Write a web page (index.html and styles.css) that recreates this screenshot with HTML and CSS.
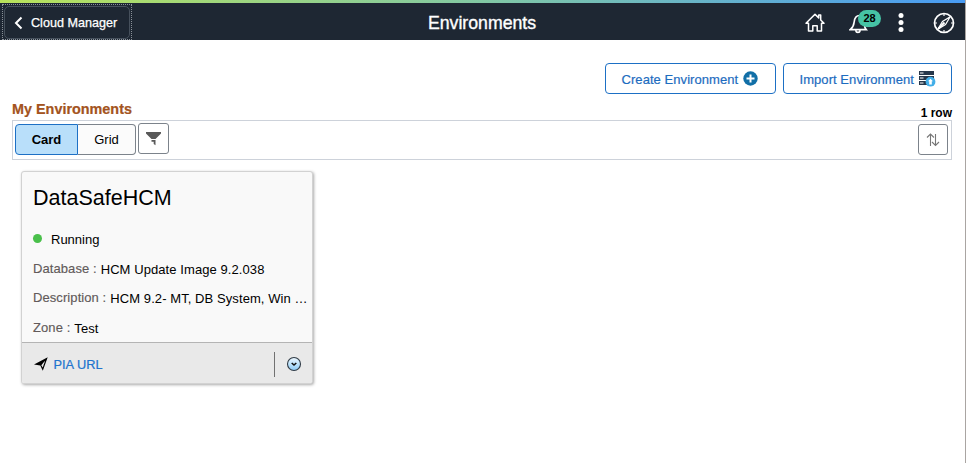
FILE: index.html
```html
<!DOCTYPE html>
<html lang="en">
<head>
<meta charset="utf-8">
<title>Environments</title>
<link rel="stylesheet" href="styles.css">
</head>
<body>
<div class="window">
  <header class="header">
    <div class="header-side">
      <div class="back-focus">
        <button class="back">
          <svg width="9" height="14" viewBox="0 0 9 14"><path d="M7.500 1.500 2 7l5.500 5.500" fill="none" stroke="#fff" stroke-width="2"/></svg>
          <span>Cloud Manager</span>
        </button>
      </div>
    </div>
    <h1 class="title">Environments</h1>
    <nav class="header-side actions">
      <svg class="home" width="20" height="19" viewBox="0 0 20 19" fill="none" stroke="#fff" stroke-width="1.500" stroke-linejoin="round"><path d="M1 10.300 10 1.200l3.700 3.700V2h2v5l3.300 3.300h-2.500V18h-4.300v-5.300H7.800V18H3.500v-7.700z"/></svg>
      <span class="bell">
        <svg width="20" height="22" viewBox="0 0 20 22" fill="none" stroke="#fff" stroke-width="1.600"><path d="M1.200 17.600h16c-1.500-1.600-2-3-1.700-6.600.4-4.500-1.200-7.200-4.500-7.500-3.400-.2-5.400 2.300-5.800 6.300-.4 3.800-1.300 5.600-4 7.800zM6.700 18.500c.5 2.500 4 2.500 4.500 0"/></svg>
        <span class="badge">28</span>
      </span>
      <svg class="dots" width="6" height="19" viewBox="0 0 6 19" fill="#fff"><circle cx="3" cy="2.600" r="2.500"/><circle cx="3" cy="9.500" r="2.500"/><circle cx="3" cy="16.400" r="2.500"/></svg>
      <svg class="compass" width="22" height="22" viewBox="0 0 22 22" fill="none" stroke="#fff"><circle cx="11" cy="11" r="9.500" stroke-width="1.700"/><path d="m17.200 4.800-4.700 7.700-7.700 4.700 4.700-7.700z" stroke-width="1.200"/><path d="m5.500 16.500 6-6" stroke-width="1.900"/><path d="M11 2v2M11 18v2M2 11h2M18 11h2" stroke-width="1.200"/></svg>
    </nav>
  </header>
  <main class="main">
    <div class="toolbar">
      <button class="action create"><span>Create Environment</span>
        <svg width="15" height="15" viewBox="0 0 15 15"><circle cx="7.500" cy="7.500" r="7.200" fill="#116fa7"/><path d="M7.500 3.500v8M3.500 7.500h8" stroke="#fff" stroke-width="2"/></svg>
      </button>
      <button class="action import"><span>Import Environment</span>
        <svg width="17" height="17" viewBox="0 0 17 17"><path d="M0 1h15v4H0zM0 6h15v4H0zM0 11h12v4H0z" fill="#26374a"/><path d="M1 3h3.500M1 8h3.500M1 13h3.500" stroke="#fff"/><circle cx="11.500" cy="11.700" r="4.900" fill="#42aee8"/><path d="m11.500 8.800 2.500 2.500h-1.200v3.200h-2.600v-3.200H9z" fill="#fff"/></svg>
      </button>
    </div>
    <div class="section-head"><h2>My Environments</h2><span>1 row</span></div>
    <div class="viewbar">
      <div class="toggle"><button class="card-view">Card</button><button class="grid-view">Grid</button></div>
      <button class="square filter"><svg width="15" height="14" viewBox="0 0 15 14" fill="#595959"><path d="M0 0h15v1.500L9.500 7h-4L0 1.500zM5.500 8h4v5.200L7.700 12V9.700H5.500z"/></svg></button>
      <button class="square sort"><svg width="14" height="14" viewBox="0 0 14 14" fill="none" stroke="#777" stroke-width="1.100"><path d="M4.500 13V1M1 4.500 4.500 1 8 4.500M9.500 1v11.500M6 9l3.500 3.500L13 9"/></svg></button>
    </div>
    <article class="env">
      <div class="env-body">
        <h3>DataSafeHCM</h3>
        <div class="status"><i></i>Running</div>
        <dl>
          <div><dt>Database :</dt><dd>HCM Update Image 9.2.038</dd></div>
          <div><dt>Description :</dt><dd>HCM 9.2- MT, DB System, Win …</dd></div>
          <div><dt>Zone :</dt><dd>Test</dd></div>
        </dl>
      </div>
      <footer class="env-foot">
        <svg width="14" height="14" viewBox="0 0 14 14"><path d="M13.700.2 8.800 13.800 6.300 8.400 0 7.400z"/><path d="M7.300 8.300 11.200 3.400 8.700 10.500z" fill="#e9e9e9"/></svg>
        <a>PIA URL</a>
        <div class="more"><svg width="16" height="16" viewBox="0 0 16 16"><defs><linearGradient id="blue" x2="0" y2="1"><stop stop-color="#eef8ff"/><stop offset="1" stop-color="#8dccf7"/></linearGradient></defs><circle cx="8" cy="8" r="6.500" fill="url(#blue)" stroke="#303b45" stroke-width="1.100"/><path d="M5.700 7 8 9l2.300-2" fill="none" stroke="#111" stroke-width="1.600"/></svg></div>
      </footer>
    </article>
  </main>
</div>
</body>
</html>
```
FILE: styles.css
```css
* { box-sizing: border-box; }
body { margin: 0; font: 13px/16px "Liberation Sans", Arial, sans-serif; color: #000; background: #fff; }
button { font: inherit; margin: 0; padding: 0; }
svg { display: block; flex: none; }
h1, h2, h3, dl, dd { margin: 0; }
.window { height: 463px; border-right: 1px solid #aaa5a2; }
.window::before { content: ""; display: block; height: 3px; background: linear-gradient(90deg, #b9e35b, #82c8a4 50%, #489bf4); }
.header { height: 37px; background: #1e2733; color: #fff; display: grid; grid-template-columns: 1fr auto 1fr; }
.back-focus { width: 130px; height: 36px; margin-left: 2px; margin-top: 1px; padding: 1px; border: 1px dotted #8b929a; }
.back { display: flex; align-items: center; gap: 8px; width: 126px; height: 33px; padding-left: 9px; border: 1px solid #46505c; border-radius: 5px; background: none; color: #fff; -webkit-text-stroke: .25px #fff; font-size: 12.600px; white-space: nowrap; }
.back span { padding-top: 1px; }
.title { margin-left: -1px; font-size: 17.700px; line-height: 40px; font-weight: 400; -webkit-text-stroke: .35px #fff; }
.actions { display: flex; align-items: center; justify-content: flex-end; padding: 0 10px 1px 0; }
.home { margin-right: 24px; }
.bell { position: relative; margin-right: 29px; }
.badge { position: absolute; left: 9px; top: -2px; width: 23px; height: 17px; border-radius: 9px; background: #46c3a5; color: #000; font: bold 11px/17px "Liberation Sans", sans-serif; text-align: center; }
.dots { margin-right: 29px; }
.main { padding: 23px 13px 0 12px; }
.toolbar { display: flex; justify-content: flex-end; gap: 7px; height: 31px; }
.action { display: flex; align-items: center; border: 1px solid #1d70c5; border-radius: 4px; background: #fff; color: #1d6cc0; white-space: nowrap; letter-spacing: .06px; -webkit-text-stroke: .2px #1d6cc0; }
.action span { padding-top: 2px; }
.action svg { margin-left: 5px; }
.create { width: 171px; padding-left: 15.500px; }
.import { width: 169px; padding-left: 15.500px; }
.section-head { height: 26px; display: flex; justify-content: space-between; font-weight: bold; }
.section-head h2 { color: #a35320; font-size: 14.400px; line-height: 30px; -webkit-text-stroke: .2px #a35320; }
.section-head span { font-size: 12px; line-height: 38px; }
.viewbar { height: 40px; display: flex; padding: 3px 3px 3px 2px; border: 1px solid #cdd2da; }
.toggle { display: flex; height: 31px; margin-right: 2px; }
.toggle button { border: 1px solid #7c838b; background: #fbfbfb; }
.toggle .card-view { width: 63px; border-color: #1d70c5; border-radius: 4px 0 0 4px; background: #b9dffa; font-weight: bold; }
.toggle .grid-view { width: 58px; border-left: 0; border-radius: 0 4px 4px 0; }
.square { display: flex; align-items: center; justify-content: center; height: 31px; border: 1px solid #7c838b; border-radius: 3px; background: #fff; }
.filter { width: 31px; margin-top: -1px; }
.sort { width: 30px; margin-left: auto; }
.env { width: 292px; height: 213px; margin: 11px 0 0 9px; border: 1px solid #d2d2d2; border-radius: 3px; box-shadow: 1px 1px 3px #aaa; background: #f9f9f9; overflow: hidden; }
.env-body { height: 170px; padding: 12px 0 0 11px; white-space: nowrap; }
.env h3 { font-size: 21.500px; line-height: 28px; font-weight: 400; }
.status { display: flex; align-items: center; height: 16px; margin-top: 20px; }
.status i { width: 9px; height: 9px; margin: -3px 9px 0 0; border-radius: 50%; background: #4ac04b; }
dl { margin-top: 13px; }
dl div { display: flex; gap: 4px; height: 29.300px; }
dt { color: #625a5a; letter-spacing: .08px; -webkit-text-stroke: .15px #625a5a; }
dd { padding-top: 1px; letter-spacing: .08px; }
.env-foot { height: 42px; display: flex; align-items: center; border-top: 1px solid #b4b4b4; background: #e9e9e9; padding-left: 12px; }
.env-foot a { margin: 2px 0 0 5.500px; font-size: 12.800px; color: #2174ce; -webkit-text-stroke: .2px #2174ce; }
.more { width: 38px; height: 25px; display: flex; align-items: center; padding-left: 11px; margin: 1px 0 0 auto; border-left: 1px solid #717171; }
```
